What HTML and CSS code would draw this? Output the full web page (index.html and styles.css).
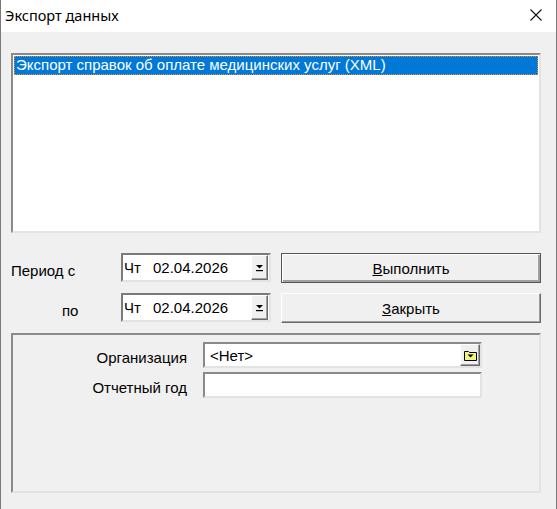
FILE: index.html
```html
<!DOCTYPE html>
<html lang="ru">
<head>
    <meta charset="UTF-8">
    <title>Экспорт данных</title>
    <link rel="stylesheet" href="styles.css">
</head>
<body>
<div class="window">
    <div class="titlebar">
        <span class="title">Экспорт данных</span>
        <svg class="close" width="14" height="14" viewBox="0 0 14 14">
            <path d="M1.5 1.5 L12.5 12.5 M12.5 1.5 L1.5 12.5" stroke="#111" stroke-width="1.1" fill="none"/>
        </svg>
    </div>
    <div class="client">
        <ul class="listbox">
            <li class="selected">Экспорт справок об оплате медицинских услуг (XML)</li>
        </ul>

        <div class="period">
            <label class="lbl">Период с</label>
            <div class="datebox">
                <span class="dow">Чт</span><span class="date">02.04.2026</span>
                <span class="dropbtn">
                    <svg width="9" height="8" viewBox="0 0 9 8"><path d="M1 1 H8 L4.5 4.5 Z" fill="#000"/><rect x="1" y="6" width="7" height="1.2" fill="#000"/></svg>
                </span>
            </div>
            <button class="btn default"><u>В</u>ыполнить</button>

            <label class="lbl lbl-to">по</label>
            <div class="datebox">
                <span class="dow">Чт</span><span class="date">02.04.2026</span>
                <span class="dropbtn">
                    <svg width="9" height="8" viewBox="0 0 9 8"><path d="M1 1 H8 L4.5 4.5 Z" fill="#000"/><rect x="1" y="6" width="7" height="1.2" fill="#000"/></svg>
                </span>
            </div>
            <button class="btn"><u>З</u>акрыть</button>
        </div>

        <div class="group">
            <div class="field-row">
                <span class="flabel">Организация</span>
                <div class="field combo">
                    <span class="value">&lt;Нет&gt;</span>
                    <span class="folderbtn">
                        <svg width="13" height="11" viewBox="0 0 13 11">
                            <path d="M0.5 1.5 H4.5 L5.5 2.5 H12.5 V10.5 H0.5 Z" fill="#f4f47a" stroke="#000"/>
                            <path d="M3.5 4.5 H9.5 L6.5 7.5 Z" fill="#000"/>
                        </svg>
                    </span>
                </div>
            </div>
            <div class="field-row">
                <span class="flabel">Отчетный год</span>
                <div class="field"></div>
            </div>
        </div>
    </div>
</div>
</body>
</html>
```

FILE: styles.css
```css
*{
    margin:0;
    padding:0;
    box-sizing: border-box;
    list-style: none;
}
body,html{
    height: 100%;
    overflow: hidden;
}
body{
    font-family: "Liberation Sans", Arial, sans-serif;
    font-size: 15px;
    color: #000;
}
.window{
    width:557px;
    height:509px;
    display: flex;
    flex-direction: column;
    background: #f0f0f0;
    border-left: 1px solid #7a7a7a;
    border-right: 1px solid #7a7a7a;
}
.titlebar{
    height:32px;
    background: #fff;
    display: flex;
    align-items: center;
    justify-content: space-between;
    padding: 0 13px 0 4px;
}
.title{
    font-family: "Noto Sans", "Open Sans", sans-serif;
    font-size: 14.5px;
    color: #000;
    margin-top: -2px;
}
.close{
    margin-top: -2px;
}
.client{
    flex: 1;
    padding: 21px 14px 0 10px;
}
.listbox{
    width:530px;
    height:180px;
    background: #fff;
    border-top: 2px solid #8a8a8a;
    border-left: 2px solid #8a8a8a;
    border-right: 2px solid #e3e3e3;
    border-bottom: 2px solid #e3e3e3;
    padding: 1px 1px 0 1px;
}
.listbox li.selected{
    height:19px;
    line-height: 17px;
    background: #0078d7;
    color: #fff;
    padding-left: 2px;
    outline: 1px dotted #e08a3a;
    outline-offset: -1px;
}
.period{
    margin-top: 20px;
    display: grid;
    grid-template-columns: 100px 150px 260px;
    grid-template-rows: 30px 30px;
    column-gap: 10px;
    row-gap: 10px;
}
.lbl{
    padding-top: 9px;
    line-height: 18px;
}
.lbl-to{
    padding-left: 51px;
}
.datebox{
    height:29px;
    background: #fff;
    border-top: 2px solid #7a7a7a;
    border-left: 2px solid #7a7a7a;
    border-right: 2px solid #e3e3e3;
    border-bottom: 2px solid #e3e3e3;
    display: flex;
    align-items: center;
    padding-left: 1px;
}
.dow{
    width:29px;
}
.date{
    flex: 1;
}
.dropbtn{
    width:17px;
    height:25px;
    background: #f0f0f0;
    border-top: 1px solid #fff;
    border-left: 1px solid #fff;
    border-right: 1px solid #696969;
    border-bottom: 1px solid #696969;
    box-shadow: inset -1px -1px 0 #a0a0a0;
    display: flex;
    align-items: center;
    justify-content: center;
    margin-right: 1px;
}
.btn{
    height:30px;
    font-family: "Liberation Sans", Arial, sans-serif;
    font-size: 15px;
    color: #000;
    background: #f0f0f0;
    border-top: 1px solid #fff;
    border-left: 1px solid #fff;
    border-right: 1px solid #696969;
    border-bottom: 1px solid #696969;
    box-shadow: inset -1px -1px 0 #a0a0a0;
}
.btn.default{
    border: 1px solid #555;
    box-shadow: inset 1px 1px 0 #fff, inset -2px -2px 0 #a0a0a0;
}
.group{
    margin-top: 10px;
    width:530px;
    height:160px;
    border-top: 2px solid #8a8a8a;
    border-left: 2px solid #8a8a8a;
    border-right: 2px solid #e3e3e3;
    border-bottom: 2px solid #e3e3e3;
    padding-top: 7px;
    display: flex;
    flex-direction: column;
    gap: 4px;
}
.field-row{
    display: flex;
    align-items: center;
}
.flabel{
    width:174px;
    text-align: right;
    padding-top: 5px;
    margin-right: 16px;
}
.field{
    width:279px;
    height:26px;
    background: #fff;
    border-top: 2px solid #8a8a8a;
    border-left: 2px solid #8a8a8a;
    border-right: 2px solid #e3e3e3;
    border-bottom: 2px solid #e3e3e3;
}
.combo{
    display: flex;
    align-items: center;
    padding-left: 5px;
}
.value{
    flex: 1;
}
.folderbtn{
    width:20px;
    height:22px;
    background: #f0f0f0;
    border-top: 1px solid #fff;
    border-left: 1px solid #fff;
    border-right: 1px solid #696969;
    border-bottom: 1px solid #696969;
    box-shadow: inset -1px -1px 0 #a0a0a0;
    display: flex;
    align-items: center;
    justify-content: center;
}
```
